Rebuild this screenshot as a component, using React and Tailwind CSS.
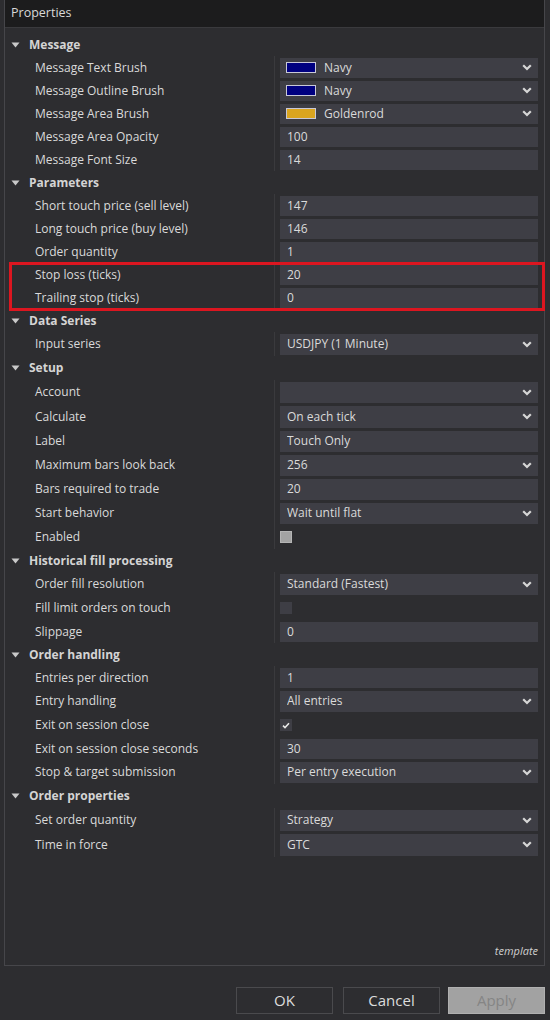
import React from 'react';

// NinjaTrader-style strategy property grid

const NAVY = '#000080';
const GOLD = '#daa520';

const GROUPS = [
  {
    title: 'Message',
    items: [
      { label: 'Message Text Brush', type: 'brush', value: 'Navy', color: NAVY },
      { label: 'Message Outline Brush', type: 'brush', value: 'Navy', color: NAVY },
      { label: 'Message Area Brush', type: 'brush', value: 'Goldenrod', color: GOLD },
      { label: 'Message Area Opacity', type: 'text', value: '100' },
      { label: 'Message Font Size', type: 'text', value: '14' },
    ],
  },
  {
    title: 'Parameters',
    items: [
      { label: 'Short touch price (sell level)', type: 'text', value: '147' },
      { label: 'Long touch price (buy level)', type: 'text', value: '146' },
      { label: 'Order quantity', type: 'text', value: '1' },
      { label: 'Stop loss (ticks)', type: 'text', value: '20' },
      { label: 'Trailing stop (ticks)', type: 'text', value: '0' },
    ],
  },
  {
    title: 'Data Series',
    items: [{ label: 'Input series', type: 'combo', value: 'USDJPY (1 Minute)', h: 'h-[24px]' }],
  },
  {
    title: 'Setup',
    h: 'h-[24px]',
    items: [
      { label: 'Account', type: 'combo', value: '', h: 'h-[24px]' },
      { label: 'Calculate', type: 'combo', value: 'On each tick', h: 'h-[25px]' },
      { label: 'Label', type: 'text', value: 'Touch Only', h: 'h-[24px]' },
      { label: 'Maximum bars look back', type: 'combo', value: '256', h: 'h-[24px]' },
      { label: 'Bars required to trade', type: 'text', value: '20', h: 'h-[24px]' },
      { label: 'Start behavior', type: 'combo', value: 'Wait until flat', h: 'h-[24px]' },
      { label: 'Enabled', type: 'check', state: 'grey', h: 'h-[24px]' },
    ],
  },
  {
    title: 'Historical fill processing',
    items: [
      { label: 'Order fill resolution', type: 'combo', value: 'Standard (Fastest)', h: 'h-[24px]' },
      { label: 'Fill limit orders on touch', type: 'check', state: 'off', h: 'h-[24px]' },
      { label: 'Slippage', type: 'text', value: '0' },
    ],
  },
  {
    title: 'Order handling',
    items: [
      { label: 'Entries per direction', type: 'text', value: '1' },
      { label: 'Entry handling', type: 'combo', value: 'All entries', h: 'h-[24px]' },
      { label: 'Exit on session close', type: 'check', state: 'on', h: 'h-[24px]' },
      { label: 'Exit on session close seconds', type: 'text', value: '30' },
      { label: 'Stop & target submission', type: 'combo', value: 'Per entry execution', h: 'h-[24px]' },
    ],
  },
  {
    title: 'Order properties',
    h: 'h-[24px]',
    items: [
      { label: 'Set order quantity', type: 'combo', value: 'Strategy', h: 'h-[24px]' },
      { label: 'Time in force', type: 'combo', value: 'GTC', h: 'h-[25px]' },
    ],
  },
];

function Chevron() {
  return (
    <svg width="10" height="7" viewBox="0 0 10 7" className="shrink-0">
      <path d="M1.2 1.2 L5 5 L8.8 1.2" fill="none" stroke="#d6d6d6" strokeWidth="2.2" />
    </svg>
  );
}

function Triangle() {
  return (
    <svg width="9" height="6" viewBox="0 0 9 6">
      <path d="M0.5 0.5 H8.5 L4.5 5.5 Z" fill="#c9c9c9" />
    </svg>
  );
}

function Value({ item }) {
  if (item.type === 'check') {
    if (item.state === 'grey') return <div className="w-[12px] h-[12px] bg-[#a3a3a3] border border-[#b5b5b5]" />;
    if (item.state === 'off') return <div className="w-[12px] h-[12px] bg-[#3e3e45]" />;
    return (
      <div className="w-[12px] h-[12px] bg-[#3e3e45] flex items-center justify-center">
        <svg width="8" height="7" viewBox="0 0 8 7">
          <path d="M1 3.6 L3 5.5 L7 1.2" fill="none" stroke="#e8e8e8" strokeWidth="1.6" />
        </svg>
      </div>
    );
  }
  return (
    <div className="h-full py-[1.5px]">
      <div className="h-full bg-[#3e3e45] flex items-center pl-[7px] pr-[6px]">
        {item.type === 'brush' && (
          <div className="w-[30px] h-[11px] border border-[#c8c8d8] mr-[8px] -ml-[1px]" style={{ background: item.color }} />
        )}
        <span className="flex-1 truncate">{item.value}</span>
        {(item.type === 'combo' || item.type === 'brush') && <Chevron />}
      </div>
    </div>
  );
}

function Group({ group }) {
  return (
    <div>
      <div className={`${group.h || 'h-[23px]'} flex items-center pl-[6px]`}>
        <Triangle />
        <span className="ml-[9px] font-bold text-[#d4d4d4]">{group.title}</span>
      </div>
      {group.items.map((item) => (
        <div key={item.label} className={`${item.h || 'h-[23px]'} flex`}>
          <div className="w-[270px] shrink-0 border-r border-[#3a3a3d] pl-[30px] flex items-center">
            {item.label}
          </div>
          <div className="flex-1 ml-[5px] mr-[6px] flex flex-col justify-center">
            <Value item={item} />
          </div>
        </div>
      ))}
    </div>
  );
}

export default function App() {
  return (
    <div
      className="w-[550px] h-[1020px] bg-[#2d2d30] text-[#dadada] text-[12px] overflow-hidden flex flex-col"
      style={{ fontFamily: '"Open Sans", "Noto Sans", sans-serif' }}
    >
      <div className="relative ml-[4px] mr-[5px] h-[966px] border border-t-0 border-[#46464a] flex flex-col">
        <div className="h-[28px] bg-[#1c1c1d] border-b border-[#3a3a3d] flex items-center pl-[6px] text-[12.5px] text-[#d8d8d8]">
          Properties
        </div>
        <div className="pt-[5px] flex-1">
          {GROUPS.map((g) => (
            <Group key={g.title} group={g} />
          ))}
        </div>
        <div className="text-right pr-[6px] pb-[6px] italic text-[11px] text-[#cfcfcf]">template</div>

        {/* highlight annotation */}
        <div className="absolute left-[4px] top-[262px] w-[536px] h-[49px] border-[3px] border-[#dc1620] pointer-events-none" />
      </div>

      <div className="flex justify-end pr-[5px] mt-[21px] text-[15px]">
        <button className="w-[97px] h-[27px] mr-[10px] border border-[#4a4a4d] text-[#dcdcdc]">OK</button>
        <button className="w-[97px] h-[27px] mr-[8px] border border-[#4a4a4d] text-[#dcdcdc]">Cancel</button>
        <button className="w-[97px] h-[27px] bg-[#a2a2a2] border border-[#b0b0b0] text-[#858585]">Apply</button>
      </div>
    </div>
  );
}
